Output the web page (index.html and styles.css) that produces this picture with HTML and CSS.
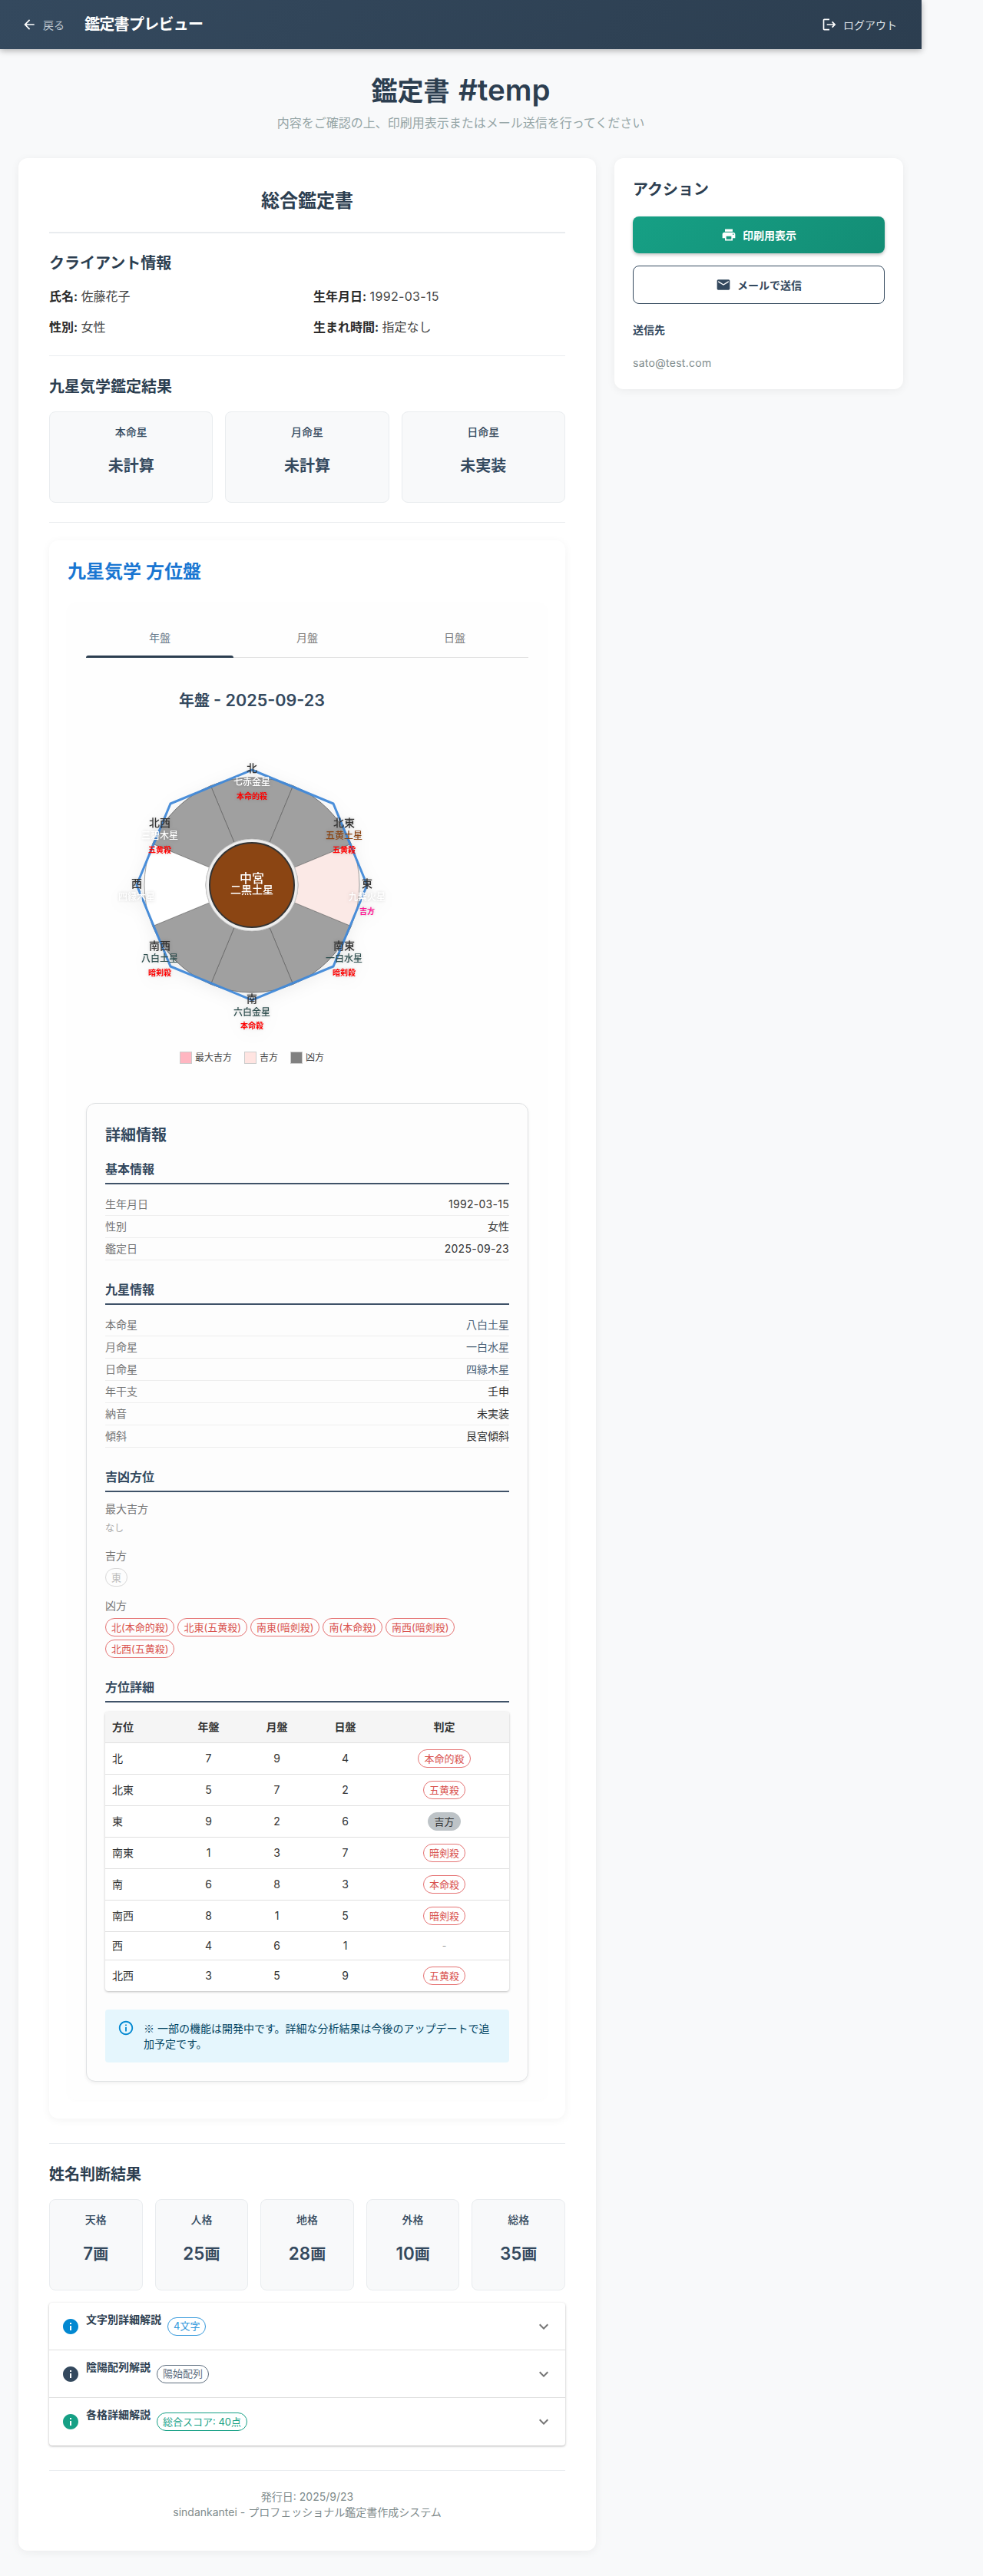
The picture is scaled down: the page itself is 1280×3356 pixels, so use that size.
FILE: index.html
```html
<!DOCTYPE html>
<html lang="ja">
<head>
<meta charset="utf-8">
<title>鑑定書プレビュー</title>
<link rel="stylesheet" href="styles.css">
</head>
<body>
<div class="page">
  <header class="appbar">
    <div class="appbar-left">
      <a class="back"><svg class="ic20" viewBox="0 0 24 24"><path d="M20 11H7.83l5.59-5.59L12 4l-8 8 8 8 1.41-1.41L7.83 13H20v-2z"/></svg><span>戻る</span></a>
      <h1 class="appbar-title">鑑定書プレビュー</h1>
    </div>
    <a class="logout"><svg class="ic20" viewBox="0 0 24 24"><path d="M17 7l-1.41 1.41L18.17 11H8v2h10.17l-2.58 2.58L17 17l5-5zM4 5h8V3H4c-1.1 0-2 .9-2 2v14c0 1.1.9 2 2 2h8v-2H4V5z"/></svg><span>ログアウト</span></a>
  </header>

  <div class="intro">
    <h2 class="intro-title">鑑定書 <span class="lat-title">#temp</span></h2>
    <p class="intro-sub">内容をご確認の上、印刷用表示またはメール送信を行ってください</p>
  </div>

  <div class="columns">
    <main class="card main-card">
      <h3 class="doc-title">総合鑑定書</h3>
      <hr class="rule rule-title">
      <h4 class="sec-title">クライアント情報</h4>
      <div class="client-grid">
        <div><b>氏名:</b> 佐藤花子</div>
        <div><b>生年月日:</b> <span class="lat">1992-03-15</span></div>
        <div><b>性別:</b> 女性</div>
        <div><b>生まれ時間:</b> 指定なし</div>
      </div>
      <hr class="rule">
      <h4 class="sec-title">九星気学鑑定結果</h4>
      <div class="stat-grid three">
        <div class="stat"><div class="stat-label">本命星</div><div class="stat-value">未計算</div></div>
        <div class="stat"><div class="stat-label">月命星</div><div class="stat-value">未計算</div></div>
        <div class="stat"><div class="stat-label">日命星</div><div class="stat-value">未実装</div></div>
      </div>
      <hr class="rule">

      <section class="board-card">
        <h3 class="board-title">九星気学 方位盤</h3>
        <div class="board-panel">
          <div class="tabs">
            <div class="tab active">年盤</div>
            <div class="tab">月盤</div>
            <div class="tab">日盤</div>
          </div>
          <div class="chart-box">
            <h4 class="chart-title">年盤 <span class="lat-chart">- 2025-09-23</span></h4>
            <svg class="chart" viewBox="0 0 432 400" width="432" height="400">
              <g transform="translate(216 194)">
                <circle r="140" class="disc"/>
                <g class="wedge-bad">
                  <path d="M-23 -55.4L-53.6 -129.3A140 140 0 0 1 53.6 -129.3L23 -55.4A60 60 0 0 0 -23 -55.4Z"/>
                  <path d="M23 -55.4L53.6 -129.3A140 140 0 0 1 129.3 -53.6L55.4 -23A60 60 0 0 0 23 -55.4Z"/>
                  <path d="M55.4 23L129.3 53.6A140 140 0 0 1 53.6 129.3L23 55.4A60 60 0 0 0 55.4 23Z"/>
                  <path d="M23 55.4L53.6 129.3A140 140 0 0 1 -53.6 129.3L-23 55.4A60 60 0 0 0 23 55.4Z"/>
                  <path d="M-23 55.4L-53.6 129.3A140 140 0 0 1 -129.3 53.6L-55.4 23A60 60 0 0 0 -23 55.4Z"/>
                  <path d="M-55.4 -23L-129.3 -53.6A140 140 0 0 1 -53.6 -129.3L-23 -55.4A60 60 0 0 0 -55.4 -23Z"/>
                </g>
                <path class="wedge-good" d="M55.4 -23L129.3 -53.6A140 140 0 0 1 129.3 53.6L55.4 23A60 60 0 0 0 55.4 -23Z"/>
                <path class="wedge-none" d="M-55.4 23L-129.3 53.6A140 140 0 0 1 -129.3 -53.6L-55.4 -23A60 60 0 0 0 -55.4 23Z"/>
                <polygon class="octagon" points="0,-150 106,-106 150,0 106,106 0,150 -106,106 -150,0 -106,-106"/>
                <circle r="60" class="ring"/>
                <circle r="55" class="hub"/>
                <text class="hub-a" y="-9" dy=".35em">中宮</text>
                <text class="hub-b" y="6" dy=".35em">二黒土星</text>
                <g class="labels">
                  <text class="dir" y="-152" dy=".35em">北</text>
                  <text class="star w" y="-134" dy=".35em">七赤金星</text>
                  <text class="kill" y="-116" dy=".35em">本命的殺</text>

                  <text class="dir" x="120" y="-81" dy=".35em">北東</text>
                  <text class="star b" x="120" y="-64" dy=".35em">五黄土星</text>
                  <text class="kill" x="120" y="-46" dy=".35em">五黄殺</text>

                  <text class="dir" x="150" y="-2" dy=".35em">東</text>
                  <text class="star w" x="150" y="16" dy=".35em">九紫火星</text>
                  <text class="lucky" x="150" y="34" dy=".35em">吉方</text>

                  <text class="dir" x="120" y="79" dy=".35em">南東</text>
                  <text class="star d" x="120" y="96" dy=".35em">一白水星</text>
                  <text class="kill" x="120" y="114" dy=".35em">暗剣殺</text>

                  <text class="dir" y="148" dy=".35em">南</text>
                  <text class="star d" y="166" dy=".35em">六白金星</text>
                  <text class="kill" y="183" dy=".35em">本命殺</text>

                  <text class="dir" x="-120" y="79" dy=".35em">南西</text>
                  <text class="star d" x="-120" y="96" dy=".35em">八白土星</text>
                  <text class="kill" x="-120" y="114" dy=".35em">暗剣殺</text>

                  <text class="dir" x="-150" y="-2" dy=".35em">西</text>
                  <text class="star w" x="-150" y="16" dy=".35em">四緑木星</text>

                  <text class="dir" x="-120" y="-81" dy=".35em">北西</text>
                  <text class="star w" x="-120" y="-64" dy=".35em">三碧木星</text>
                  <text class="kill" x="-120" y="-46" dy=".35em">五黄殺</text>
                </g>
              </g>
            </svg>
            <div class="legend">
              <span class="lg"><i class="sw sw-max"></i>最大吉方</span>
              <span class="lg"><i class="sw sw-good"></i>吉方</span>
              <span class="lg"><i class="sw sw-bad"></i>凶方</span>
            </div>
          </div>

          <section class="detail">
            <h4 class="detail-title">詳細情報</h4>
            <h5 class="detail-head">基本情報</h5>
            <div class="kv"><span>生年月日</span><b class="lat">1992-03-15</b></div>
            <div class="kv"><span>性別</span><b>女性</b></div>
            <div class="kv"><span>鑑定日</span><b class="lat">2025-09-23</b></div>

            <h5 class="detail-head">九星情報</h5>
            <div class="kv"><span>本命星</span><b class="slate">八白土星</b></div>
            <div class="kv"><span>月命星</span><b class="slate">一白水星</b></div>
            <div class="kv"><span>日命星</span><b class="slate">四緑木星</b></div>
            <div class="kv"><span>年干支</span><b>壬申</b></div>
            <div class="kv"><span>納音</span><b>未実装</b></div>
            <div class="kv"><span>傾斜</span><b>艮宮傾斜</b></div>

            <h5 class="detail-head">吉凶方位</h5>
            <div class="fortune">
              <div class="f-label">最大吉方</div>
              <div class="f-none">なし</div>
              <div class="f-label">吉方</div>
              <div class="chips"><span class="chip chip-faint">東</span></div>
              <div class="f-label">凶方</div>
              <div class="chips">
                <span class="chip chip-red">北(本命的殺)</span>
                <span class="chip chip-red">北東(五黄殺)</span>
                <span class="chip chip-red">南東(暗剣殺)</span>
                <span class="chip chip-red">南(本命殺)</span>
                <span class="chip chip-red">南西(暗剣殺)</span>
                <span class="chip chip-red">北西(五黄殺)</span>
              </div>
            </div>

            <h5 class="detail-head">方位詳細</h5>
            <table class="dir-table">
              <colgroup><col class="c1"><col class="c2"><col class="c2"><col class="c2"><col></colgroup>
              <thead><tr><th class="left">方位</th><th>年盤</th><th>月盤</th><th>日盤</th><th>判定</th></tr></thead>
              <tbody>
                <tr><td class="left">北</td><td>7</td><td>9</td><td>4</td><td><span class="chip chip-red">本命的殺</span></td></tr>
                <tr><td class="left">北東</td><td>5</td><td>7</td><td>2</td><td><span class="chip chip-red">五黄殺</span></td></tr>
                <tr><td class="left">東</td><td>9</td><td>2</td><td>6</td><td><span class="chip chip-fill">吉方</span></td></tr>
                <tr><td class="left">南東</td><td>1</td><td>3</td><td>7</td><td><span class="chip chip-red">暗剣殺</span></td></tr>
                <tr><td class="left">南</td><td>6</td><td>8</td><td>3</td><td><span class="chip chip-red">本命殺</span></td></tr>
                <tr><td class="left">南西</td><td>8</td><td>1</td><td>5</td><td><span class="chip chip-red">暗剣殺</span></td></tr>
                <tr><td class="left">西</td><td>4</td><td>6</td><td>1</td><td class="dash">-</td></tr>
                <tr><td class="left">北西</td><td>3</td><td>5</td><td>9</td><td><span class="chip chip-red">五黄殺</span></td></tr>
              </tbody>
            </table>
            <div class="alert">
              <svg class="ic22" viewBox="0 0 24 24"><path d="M11 7h2v2h-2zm0 4h2v6h-2zm1-9C6.48 2 2 6.48 2 12s4.48 10 10 10 10-4.48 10-10S17.52 2 12 2zm0 18c-4.41 0-8-3.59-8-8s3.59-8 8-8 8 3.59 8 8-3.59 8-8 8z"/></svg>
              <p><span class="cjk">※</span> 一部の機能は開発中です。詳細な分析結果は今後のアップデートで追加予定です。</p>
            </div>
          </section>
        </div>
      </section>

      <hr class="rule rule-board">
      <h4 class="sec-title">姓名判断結果</h4>
      <div class="stat-grid five">
        <div class="stat"><div class="stat-label">天格</div><div class="stat-value"><span class="lat-num">7</span>画</div></div>
        <div class="stat"><div class="stat-label">人格</div><div class="stat-value"><span class="lat-num">25</span>画</div></div>
        <div class="stat"><div class="stat-label">地格</div><div class="stat-value"><span class="lat-num">28</span>画</div></div>
        <div class="stat"><div class="stat-label">外格</div><div class="stat-value"><span class="lat-num">10</span>画</div></div>
        <div class="stat"><div class="stat-label">総格</div><div class="stat-value"><span class="lat-num">35</span>画</div></div>
      </div>

      <div class="accordion">
        <div class="acc-row">
          <svg class="ic24 blue" viewBox="0 0 24 24"><path d="M12 2C6.48 2 2 6.48 2 12s4.48 10 10 10 10-4.48 10-10S17.52 2 12 2zm1 15h-2v-6h2v6zm0-8h-2V7h2v2z"/></svg>
          <span class="acc-title">文字別詳細解説</span>
          <span class="chip chip-blue">4文字</span>
          <svg class="ic24 chev" viewBox="0 0 24 24"><path d="M16.59 8.59L12 13.17 7.41 8.59 6 10l6 6 6-6z"/></svg>
        </div>
        <div class="acc-row">
          <svg class="ic24 navy" viewBox="0 0 24 24"><path d="M12 2C6.48 2 2 6.48 2 12s4.48 10 10 10 10-4.48 10-10S17.52 2 12 2zm1 15h-2v-6h2v6zm0-8h-2V7h2v2z"/></svg>
          <span class="acc-title">陰陽配列解説</span>
          <span class="chip chip-navy">陽始配列</span>
          <svg class="ic24 chev" viewBox="0 0 24 24"><path d="M16.59 8.59L12 13.17 7.41 8.59 6 10l6 6 6-6z"/></svg>
        </div>
        <div class="acc-row">
          <svg class="ic24 green" viewBox="0 0 24 24"><path d="M12 2C6.48 2 2 6.48 2 12s4.48 10 10 10 10-4.48 10-10S17.52 2 12 2zm1 15h-2v-6h2v6zm0-8h-2V7h2v2z"/></svg>
          <span class="acc-title">各格詳細解説</span>
          <span class="chip chip-green">総合スコア: 40点</span>
          <svg class="ic24 chev" viewBox="0 0 24 24"><path d="M16.59 8.59L12 13.17 7.41 8.59 6 10l6 6 6-6z"/></svg>
        </div>
      </div>

      <hr class="rule rule-foot">
      <footer class="doc-foot">
        <div>発行日: 2025/9/23</div>
        <div>sindankantei - プロフェッショナル鑑定書作成システム</div>
      </footer>
    </main>

    <aside class="card side-card">
      <h3 class="side-title">アクション</h3>
      <button class="btn btn-primary"><svg class="ic20" viewBox="0 0 24 24"><path d="M19 8H5c-1.66 0-3 1.34-3 3v6h4v4h12v-4h4v-6c0-1.66-1.34-3-3-3zm-3 11H8v-5h8v5zm3-7c-.55 0-1-.45-1-1s.45-1 1-1 1 .45 1 1-.45 1-1 1zm-1-9H6v4h12V3z"/></svg>印刷用表示</button>
      <button class="btn btn-outline"><svg class="ic20" viewBox="0 0 24 24"><path d="M20 4H4c-1.1 0-1.99.9-1.99 2L2 18c0 1.1.9 2 2 2h16c1.1 0 2-.9 2-2V6c0-1.1-.9-2-2-2zm0 4l-8 5-8-5V6l8 5 8-5v2z"/></svg>メールで送信</button>
      <div class="send-label">送信先</div>
      <div class="send-mail lat">sato@test.com</div>
    </aside>
  </div>
</div>
</body>
</html>
```
FILE: styles.css
```css
* { box-sizing: border-box; }
html, body { margin: 0; padding: 0; background: #f8f9fa; }
body { font-family: Inter, "Noto Sans CJK JP", sans-serif; color: #2c3e50; font-size: 16px; }
h1, h2, h3, h4, h5, p { margin: 0; }
svg { fill: currentColor; flex: none; display: block; }
.ic20 { width: 20px; height: 20px; }
.ic22 { width: 22px; height: 22px; }
.ic24 { width: 24px; height: 24px; }
.cjk { font-family: "Noto Sans CJK JP", sans-serif; }
.lat { letter-spacing: .02em; }
.lat-title { font-size: 38.5px; margin-left: 3px; }
.lat-chart { font-size: 21.6px; }
.lat-num { font-size: 22.4px; }

.page { width: 1200px; padding-bottom: 32px; }

.appbar { height: 64px; background: linear-gradient(135deg, #34495e, #2c3e50); color: #fff; display: flex; align-items: center; justify-content: space-between; padding: 0 32px 0 28px; box-shadow: 0 2px 8px rgba(0,0,0,.3); position: relative; }
.appbar-left { display: flex; align-items: center; }
.back { display: flex; align-items: center; gap: 8px; font-size: 14px; color: #bdc6cf; }
.back svg { color: #fff; }
.appbar-title { font-size: 20px; font-weight: 600; margin-left: 26px; letter-spacing: -.7px; line-height: 30px; }
.logout { display: flex; align-items: center; gap: 8px; font-size: 14px; color: #dfe3e7; }
.logout svg { color: #fff; }

.intro { text-align: center; padding-top: 29px; height: 142px; }
.intro-title { font-size: 34px; font-weight: 600; line-height: 48px; height: 48px; color: #2c3e50; }
.intro-sub { font-size: 16px; line-height: 24px; color: #95a5a6; margin-top: 7px; }

.columns { display: grid; grid-template-columns: 752px 376px; gap: 24px; padding: 0 24px; align-items: start; }
.card { background: #fff; border-radius: 12px; box-shadow: 0 2px 12px rgba(0,0,0,.06); }
.main-card { padding: 40px; }

.doc-title { text-align: center; font-size: 24px; font-weight: 600; line-height: 32px; }
.rule { border: 0; border-top: 1px solid #e9ecef; margin: 25px 0 26px; }
.rule-title { border-top-width: 2px; margin-top: 24px; margin-bottom: 25px; }
.sec-title { font-size: 20px; font-weight: 600; line-height: 28px; color: #2c3e50; }

.client-grid { display: grid; grid-template-columns: 1fr 1fr; gap: 16px; margin-top: 17px; line-height: 24px; color: #444; }
.client-grid b { font-weight: 600; color: #2b2b2b; }

.stat-grid { display: grid; gap: 16px; margin-top: 18px; }
.three { grid-template-columns: repeat(3, 1fr); }
.five { grid-template-columns: repeat(5, 1fr); }
.stat { background: #f8f9fa; border: 1px solid #e9ecef; border-radius: 8px; padding: 15px 16px 29px; text-align: center; }
.stat-label { font-size: 14px; font-weight: 500; line-height: 21px; color: #34495e; }
.stat-value { font-size: 20px; font-weight: 600; line-height: 36px; margin-top: 16px; color: #34495e; height: 36px; }

.board-card { background: #fff; border-radius: 12px; box-shadow: 0 2px 12px rgba(0,0,0,.05); padding: 24px; margin-top: -3px; }
.board-title { font-size: 24px; font-weight: 600; line-height: 34px; color: #1976d2; }
.board-panel { background: #fefefe; border-radius: 12px; box-shadow: 0 1px 6px rgba(0,0,0,.015); margin-top: 23px; padding: 24px; }
.tabs { display: grid; grid-template-columns: repeat(3, 1fr); border-bottom: 1px solid #e0e0e0; height: 48px; }
.tab { font-size: 14px; font-weight: 400; color: #7b7b7b; text-align: center; line-height: 44px; position: relative; }
.tab.active { color: #6a7a8a; }
.tab.active::after { content: ""; position: absolute; left: 0; right: 0; bottom: -1px; height: 3px; background: #2c3e50; border-radius: 3px 3px 0 0; }

.chart-box { width: 432px; padding-top: 38px; }
.chart-title { font-size: 20px; font-weight: 600; line-height: 34px; height: 34px; text-align: center; color: #34495e; }
.chart { margin-top: 30px; filter: drop-shadow(0 4px 10px rgba(0,0,0,.06)); }
.chart text { text-anchor: middle; }
.disc { fill: #fff; stroke: #ccc; stroke-width: 1; }
.wedge-bad path { fill: #a0a0a0; stroke: #666; stroke-width: .8; }
.wedge-good { fill: #fbe9e6; stroke: #777; stroke-width: .6; }
.wedge-none { fill: #fff; stroke: #777; stroke-width: .6; }
.octagon { fill: none; stroke: #4189d8; stroke-width: 3; stroke-linejoin: miter; opacity: .95; }
.ring { fill: #eeeeee; stroke: #c8c8c8; stroke-width: 1; }
.hub { fill: #8b4513; stroke: #333; stroke-width: 2; }
.hub-a { fill: #fff; font-size: 16px; font-weight: 500; }
.hub-b { fill: #fff; font-size: 14px; font-weight: 500; }
.dir { fill: #333; font-size: 14px; font-weight: 500; }
.star { font-size: 12px; font-weight: 500; }
.star.w { fill: #fff; }
.star.b { fill: #8b4513; }
.star.d { fill: #2f4f4f; }
.kill { fill: #f00; font-size: 10px; font-weight: 700; }
.lucky { fill: #ff1493; font-size: 10px; font-weight: 700; }
.labels { filter: drop-shadow(0 0 2px rgba(0,0,0,.18)); }

.legend { display: flex; justify-content: center; gap: 16px; font-size: 12px; color: #444; line-height: 20px; margin-top: 9px; height: 20px; }
.lg { display: flex; align-items: center; gap: 4px; }
.sw { width: 16px; height: 16px; border: 1px solid #ccc; display: block; }
.sw-max { background: #ffb6c1; }
.sw-good { background: #ffe4e1; }
.sw-bad { background: #808080; }

.detail { border: 1px solid #dfe1e3; border-radius: 12px; padding: 24px; margin-top: 49px; background: #fdfdfd; box-shadow: 0 2px 4px rgba(0,0,0,.06); }
.detail-title { font-size: 20px; font-weight: 600; line-height: 34px; color: #34495e; }
.detail-head { font-size: 16px; font-weight: 600; line-height: 24px; color: #34495e; border-bottom: 2px solid #3f5268; padding-bottom: 6px; margin: 26px 0 12px; }
.detail-title + .detail-head { margin-top: 15px; }
.kv { display: flex; justify-content: space-between; font-size: 14px; line-height: 20px; padding: 4px 0; border-bottom: 1px solid #eee; height: 29px; }
.kv:last-of-type { border-bottom: 0; }
.kv span { color: #757575; }
.kv b { font-weight: 400; color: #333; }
.kv b.slate { color: #4a5f75; }
.fortune { font-size: 14px; }
.f-label { color: #757575; line-height: 20px; }
.f-none { color: #a8a8a8; font-size: 12px; line-height: 18px; margin: 6px 0 17px; }
.chips { display: flex; flex-wrap: wrap; gap: 4px; margin: 6px 0 15px; }
.chips:last-child { margin-bottom: 0; }
.chip { display: inline-flex; align-items: center; height: 24px; padding: 0 7px; border-radius: 12px; border: 1px solid; font-size: 13px; line-height: 1; white-space: nowrap; }
.chip-faint { border-color: #d8d8d8; color: #bbb; }
.chip-red { border-color: #e57373; color: #d9534f; }
.chip-fill { background: #bdc3c7; border-color: #bdc3c7; color: #333; }
.chip-blue { border-color: #3498db; color: #3498db; }
.chip-navy { border-color: #5d6d7e; color: #5d6d7e; }
.chip-green { border-color: #16a085; color: #16a085; }

.dir-table { width: 100%; table-layout: fixed; border-collapse: separate; border-spacing: 0; background: #fff; border-radius: 4px; box-shadow: 0 1px 3px rgba(0,0,0,.25); font-size: 14px; color: #333; overflow: hidden; }
.dir-table .c1 { width: 90px; }
.dir-table .c2 { width: 89px; }
.dir-table th { background: #f5f5f5; font-weight: 600; padding: 10px 8px; line-height: 20px; text-align: center; border-bottom: 1px solid #e0e0e0; height: 40px; }
.dir-table td { padding: 8px; line-height: 20px; text-align: center; border-bottom: 1px solid #e0e0e0; }
.dir-table tr:last-child td { border-bottom: 0; }
.dir-table td .chip { vertical-align: top; }
.dir-table .left { text-align: left; padding-left: 9px; }
.dash { color: #999; font-size: 12px; }

.alert { display: flex; gap: 12px; background: #e5f6fd; color: #014361; border-radius: 4px; padding: 14px 16px; margin-top: 24px; font-size: 14px; line-height: 20px; }
.alert svg { color: #0288d1; margin-top: -1px; }

.rule-board { margin-top: 32px; }
.accordion { margin-top: 16px; background: #fff; border-radius: 4px; box-shadow: 0 1px 3px rgba(0,0,0,.3); }
.acc-row { display: flex; align-items: center; height: 62px; padding: 0 16px; border-bottom: 1px solid #e0e0e0; }
.acc-row:last-child { border-bottom: 0; }
.acc-row .ic24 { margin-right: 8px; }
.acc-title { font-size: 14px; font-weight: 600; line-height: 20px; color: #2c3e50; margin-right: 8px; align-self: flex-start; margin-top: 12px; }
.acc-row .chev { margin: 0 0 0 auto; color: #757575; }
.blue { color: #0288d1; }
.navy { color: #34495e; }
.green { color: #16a085; }

.rule-foot { margin: 32px 0 24px; }
.doc-foot { text-align: center; font-size: 14px; line-height: 20px; color: #7f8c8d; }

.side-card { padding: 24px; height: 301px; }
.side-title { font-size: 20px; font-weight: 600; line-height: 34px; }
.btn { display: flex; align-items: center; justify-content: center; gap: 8px; width: 100%; border-radius: 8px; font: inherit; font-size: 14px; font-weight: 600; cursor: pointer; }
.btn-primary { height: 48px; margin-top: 18px; color: #fff; border: 0; background: linear-gradient(135deg, #16a085, #138d75); box-shadow: 0 2px 4px rgba(0,0,0,.25); }
.btn-outline { height: 50px; margin-top: 16px; background: #fff; color: #34495e; border: 1px solid #34495e; }
.send-label { font-size: 14px; font-weight: 600; line-height: 20px; margin-top: 24px; color: #34495e; }
.send-mail { font-size: 14px; line-height: 20px; margin-top: 23px; color: #7f8c8d; }
```
